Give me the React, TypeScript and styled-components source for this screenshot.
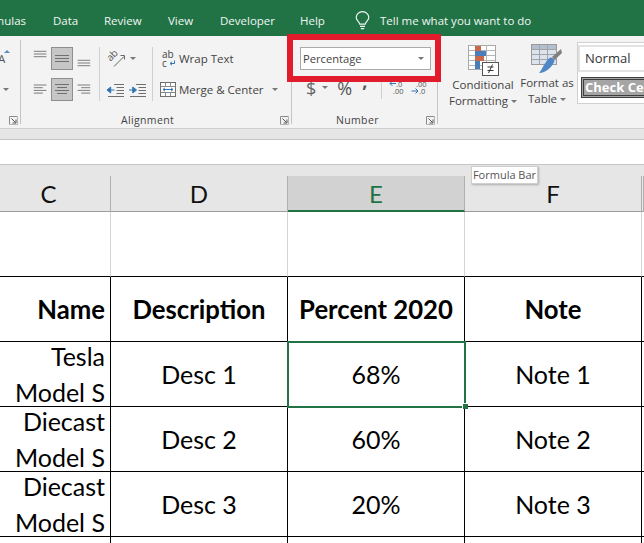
import React from "react";
import styled, { createGlobalStyle } from "styled-components";

const Global = createGlobalStyle`
  html, body { margin: 0; padding: 0; background: #fff; }
  #root { width: 644px; height: 543px; overflow: hidden; }
`;

const UI = `"Open Sans", "Noto Sans", sans-serif`;
const SHEET = `Lato, "Liberation Sans", sans-serif`;

const Page = styled.div`
  position: relative;
  width: 644px;
  height: 543px;
  overflow: hidden;
  background: #fff;
  display: flex;
  flex-direction: column;
`;

const TabBar = styled.nav`
  flex: none;
  height: 36px;
  background: #217346;
  color: #f1f6f3;
  font: 11.5px/42px ${UI};
  display: flex;
  overflow: hidden;
  white-space: nowrap;
`;
const Tab = styled.span<{ $w: number; $ml?: number }>`
  flex: none;
  width: ${(p) => p.$w}px;
  margin-left: ${(p) => p.$ml ?? 0}px;
`;
const TellMe = styled.span`
  display: flex;
  align-items: center;
  gap: 10px;
  height: 41px;
`;

const Ribbon = styled.section`
  flex: none;
  height: 92px;
  background: #f3f3f3;
  border-bottom: 1px solid #cfcfcf;
  display: flex;
  box-sizing: content-box;
  color: #444;
  font: 12px/16px ${UI};
  overflow: hidden;
`;
const Group = styled.div<{ $w: number; $last?: boolean }>`
  flex: none;
  width: ${(p) => p.$w}px;
  height: 88px;
  margin-top: 4px;
  box-sizing: border-box;
  display: flex;
  flex-direction: column;
  background: ${(p) => (p.$last ? "none" : "linear-gradient(#c4c4c4, #c4c4c4) right top / 1.5px 84px no-repeat")};
`;
const GroupBody = styled.div<{ $pl?: number }>`
  flex: 1;
  padding-top: 7px;
  padding-left: ${(p) => p.$pl ?? 0}px;
  display: flex;
  min-height: 0;
`;
const GroupFoot = styled.div<{ $pl?: number }>`
  flex: none;
  height: 16px;
  display: flex;
  align-items: center;
  font-size: 10.5px;
  letter-spacing: 0.35px;
  color: #444;
  padding: 0 3px 0 ${(p) => p.$pl ?? 0}px;
`;
const Launcher = styled.svg`
  margin-left: auto;
  width: 9px;
  height: 9px;
`;

const FontTools = styled.div`
  display: flex;
  flex-direction: column;
  gap: 8px;
  overflow: hidden;
  width: 20px;
`;
const FontRow = styled.div`
  display: flex;
  height: 23px;
  align-items: center;
`;
const SizeA = styled.span`
  margin-left: -2px;
  font-size: 11.5px;
  line-height: 27px;
  height: 27px;
  color: #555;
`;
const BlueCaret = styled.i`
  align-self: flex-start;
  margin: 3px 0 0 -1px;
  width: 0;
  height: 0;
  border-left: 3px solid transparent;
  border-right: 3px solid transparent;
  border-bottom: 3px solid #5b8ac6;
`;

const AlignGrid = styled.div`
  display: grid;
  grid-template-columns: 20px 22px 20px;
  grid-auto-rows: 23px;
  row-gap: 8px;
  align-content: start;
`;
const AlignButton = styled.div<{ $on?: boolean }>`
  box-sizing: border-box;
  width: ${(p) => (p.$on ? "22px" : "20px")};
  height: 23px;
  background: ${(p) => (p.$on ? "#c6c6c6" : "transparent")};
  border: 1px solid ${(p) => (p.$on ? "#8f8f8f" : "transparent")};
  display: flex;
  align-items: center;
  justify-content: center;
`;
const VSep = styled.div<{ $ml: number; $h?: number }>`
  flex: none;
  width: 1px;
  margin-left: ${(p) => p.$ml}px;
  height: ${(p) => p.$h ?? 54}px;
  background: #d0d0d0;
`;
const ToolStack = styled.div`
  display: flex;
  flex-direction: column;
  gap: 8px;
  margin-left: 7px;
  width: 45px;
`;
const ToolRow = styled.div<{ $gap?: number; $pl?: number }>`
  display: flex;
  align-items: center;
  height: 23px;
  gap: ${(p) => p.$gap ?? 3}px;
  padding-left: ${(p) => p.$pl ?? 0}px;
`;
const WrapStack = styled.div`
  display: flex;
  flex-direction: column;
  gap: 8px;
  margin-left: 7px;
`;
const ToolLabel = styled.span`
  white-space: nowrap;
  font-size: 11.5px;
`;
const Caret = styled.i<{ $ml?: number }>`
  display: inline-block;
  vertical-align: middle;
  flex: none;
  width: 0;
  height: 0;
  margin-left: ${(p) => p.$ml ?? 0}px;
  border-left: 3px solid transparent;
  border-right: 3px solid transparent;
  border-top: 3px solid #777;
`;

const NumberBody = styled.div`
  flex: 1;
  padding: 7px 0 0 8px;
  display: flex;
  flex-direction: column;
`;
const FormatSelect = styled.div`
  box-sizing: border-box;
  width: 131px;
  height: 23px;
  background: #fff;
  border: 1px solid #ababab;
  padding: 0 6px 0 2px;
  display: flex;
  align-items: center;
  justify-content: space-between;
  font-size: 11.2px;
  color: #444;
`;
const CurrencyRow = styled.div`
  display: flex;
  align-items: center;
  height: 23px;
  margin-top: 6px;
`;
const Dollar = styled.span`
  font-size: 18px;
  margin-left: 6px;
  color: #666;
`;
const Percent = styled.span`
  font-size: 18px;
  margin-left: 9px;
  color: #555;
`;
const Comma = styled.span`
  font-size: 18px;
  font-weight: 700;
  margin: -14px 0 0 10px;
  line-height: 14px;
  color: #555;
`;
const DecGroup = styled.div`
  display: flex;
  gap: 6px;
  margin-left: 7px;
`;

const BigButton = styled.div<{ $w: number }>`
  flex: none;
  width: ${(p) => p.$w}px;
  display: flex;
  flex-direction: column;
  align-items: center;
  margin-top: -3px;
  font-size: 11.5px;
  line-height: 16px;
  white-space: nowrap;
`;
const BigLabel = styled.span`
  margin-top: 1px;
  text-align: center;
`;
const Gallery = styled.div`
  flex: none;
  margin: -5px 0 0 1px;
  width: 70px;
  height: 62px;
  box-sizing: border-box;
  background: #fff;
  border: 1px solid #d0d0d0;
  border-right: none;
  padding: 4px 0 0 2px;
  display: flex;
  flex-direction: column;
  gap: 7px;
  overflow: hidden;
  white-space: nowrap;
`;
const StyleNormal = styled.div`
  height: 23px;
  background: #fff;
  font: 13px/23px "Open Sans", sans-serif;
  color: #333;
  padding-left: 5px;
  box-shadow: 0 0 0 2px #e2e2e2;
`;
const StyleCheck = styled.div`
  height: 21px;
  margin-left: 1px;
  background: #a5a5a5;
  border: 3px double #3f3f3f;
  box-sizing: border-box;
  color: #fff;
  font: 700 13px/15px "Open Sans", sans-serif;
  padding-left: 1px;
`;

const Band = styled.div`
  flex: none;
  height: 10px;
  background: #e6e6e6;
`;
const FormulaBar = styled.div`
  flex: none;
  height: 26px;
  box-sizing: border-box;
  background: #fff;
  border-top: 1px solid #c6c6c6;
  border-bottom: 1px solid #c6c6c6;
`;
const HeaderStrip = styled.div`
  flex: none;
  height: 11px;
  background: #e6e6e6;
`;

const SheetGrid = styled.div`
  flex: none;
  display: grid;
  grid-template-columns: 111px 177px 177px 177px 2px;
  grid-template-rows: 36px 65px 65px 65px 65px 65px 65px;
  font-family: ${SHEET};
  color: #000;
`;
const ColHead = styled.div<{ $on?: boolean; $pr?: number }>`
  box-sizing: border-box;
  display: flex;
  align-items: center;
  justify-content: center;
  font-size: 24px;
  padding-right: ${(p) => p.$pr ?? 0}px;
  background: ${(p) => (p.$on ? "#d2d2d2" : "#e6e6e6")};
  color: ${(p) => (p.$on ? "#217346" : "#111")};
  border-right: 1px solid #b0b0b0;
  border-bottom: ${(p) => (p.$on ? "2px solid #217346" : "1px solid #9e9e9e")};
`;
const Blank = styled.div<{ $end?: boolean }>`
  box-sizing: border-box;
  border-right: ${(p) => (p.$end ? "none" : "1px solid #d4d4d4")};
  border-bottom: 1px solid #000;
`;
const Cell = styled.div<{ $bold?: boolean; $right?: boolean; $on?: boolean; $end?: boolean }>`
  position: relative;
  box-sizing: border-box;
  border-right: ${(p) => (p.$end ? "none" : "1px solid #000")};
  border-bottom: 1px solid #000;
  display: flex;
  align-items: center;
  justify-content: ${(p) => (p.$right ? "flex-end" : "center")};
  padding-right: ${(p) => (p.$right ? "5px" : "0")};
  font-size: ${(p) => (p.$bold ? "25.7px" : "25px")};
  font-weight: ${(p) => (p.$bold ? 700 : 400)};
  white-space: nowrap;
  ${(p) => p.$on && `
    outline: 2px solid #217346;
    outline-offset: -1px;
    z-index: 1;
    &::after {
      content: "";
      position: absolute;
      right: -4px;
      bottom: -3px;
      width: 5px;
      height: 5px;
      background: #217346;
      border: 1px solid #fff;
      border-width: 1px 0 0 1px;
    }
  `}
`;
const NameCell = styled.div`
  box-sizing: border-box;
  border-right: 1px solid #000;
  border-bottom: 1px solid #000;
  display: flex;
  flex-direction: column;
  justify-content: flex-end;
  align-items: flex-end;
  padding-right: 5px;
  font-size: 25px;
  line-height: 36px;
  overflow: hidden;
  white-space: nowrap;
  & > span { flex: none; }
  & > span:last-child { margin-bottom: -4px; }
`;

const Highlight = styled.div`
  position: absolute;
  left: 287px;
  top: 34px;
  width: 154px;
  height: 48px;
  box-sizing: border-box;
  border: 6px solid #e31c2d;
  pointer-events: none;
`;
const Tooltip = styled.div`
  position: absolute;
  left: 471px;
  top: 166px;
  box-sizing: border-box;
  width: 67px;
  height: 18px;
  background: #fff;
  border: 1px solid #cfcfcf;
  box-shadow: 1px 1px 2px rgba(0,0,0,.25);
  font: 11px/16px ${UI};
  color: #555;
  text-align: center;
  white-space: nowrap;
  z-index: 3;
`;

const G = "#6f6f6f";
const Lines = ({ rows }: { rows: [number, number, number][] }) => (
  <svg width="20" height="21" viewBox="0 0 20 21">
    {rows.map(([a, b, y], i) => (
      <line key={i} x1={a} x2={b} y1={y} y2={y} stroke={G} strokeWidth="1" />
    ))}
  </svg>
);
const LauncherIcon = () => (
  <Launcher viewBox="0 0 9 9">
    <path d="M.5 8.5V.5h8" fill="none" stroke="#8a8a8a" />
    <path d="M2.5 2.5l4 4M7 3.5v3.5H3.5" fill="none" stroke="#555" />
    <path d="M8.5 1v7.5H1" fill="none" stroke="#b5b5b5" />
  </Launcher>
);
const Bulb = () => (
  <svg width="15" height="20" viewBox="0 0 15 20" fill="none" stroke="#f1f6f3" strokeWidth="1.2">
    <path d="M4.8 13.2C4.5 10.8 1.2 9.6 1.2 6.6a6.3 6 0 0 1 12.6 0c0 3-3.3 4.2-3.6 6.6z" />
    <path d="M5 15.3h5M5.8 17.6h3.4" />
  </svg>
);
const Orientation = () => (
  <svg width="20" height="18" viewBox="0 0 20 18">
    <text x="0" y="0" transform="translate(2 9) rotate(-45) translate(-1 3)" fontFamily="Open Sans" fontSize="10" fill="#555">ab</text>
    <path d="M7 16.5L17 6.5M13.5 5.5h4v4" stroke="#666" fill="none" />
  </svg>
);
const Indent = ({ flip }: { flip?: boolean }) => (
  <svg width="17" height="16" viewBox="0 0 17 16">
    <path d="M7 2.5h10M9.5 5.5h7.5M9.5 8.5h7.5M9.5 11.5h7.5" stroke={G} />
    <path d="M1 14.5h16" stroke={G} />
    {flip ? (
      <path d="M0 8h4.5M3.8 5L7.5 8L3.8 11z" stroke="#2f75b5" fill="#2f75b5" />
    ) : (
      <path d="M7.5 8H3M3.7 5L0 8l3.7 3z" stroke="#2f75b5" fill="#2f75b5" />
    )}
  </svg>
);
const WrapIcon = () => (
  <svg width="14" height="17" viewBox="0 0 14 17">
    <text x="0" y="8" fontFamily="Open Sans" fontSize="10" fill="#444">ab</text>
    <text x="0" y="16.5" fontFamily="Open Sans" fontSize="10" fill="#444">c</text>
    <path d="M12.5 10.5v3h-4M10 11.8l-2 1.7 2 1.7" fill="none" stroke="#2f75b5" />
  </svg>
);
const MergeIcon = () => (
  <svg width="16" height="16" viewBox="0 0 16 16" fill="none">
    <rect x=".5" y=".5" width="15" height="14" fill="#fff" stroke="#6f6f6f" />
    <path d="M.5 4.5h15M.5 10.5h15M5.5.5v4M10.5.5v4M5.5 10.5v4M10.5 10.5v4" stroke="#8a8a8a" />
    <path d="M3 7.5h10M5 5.8L3 7.5l2 1.7M11 5.8l2 1.7-2 1.7" stroke="#2f75b5" />
  </svg>
);
const DecIcon = ({ inc }: { inc?: boolean }) => (
  <svg width="16" height="16" viewBox="0 0 16 16">
    <text x={inc ? 5 : 7} y="6.5" fontFamily="Open Sans" fontSize="7.5" fill="#555">{inc ? ".00" : ".0"}</text>
    <text x={inc ? 8 : 4} y="14" fontFamily="Open Sans" fontSize="7.5" fill="#555">{inc ? ".0" : ".00"}</text>
    {inc ? (
      <path d="M.5 11h6M4.5 8.5L7 11l-2.5 2.5" fill="none" stroke="#2f75b5" />
    ) : (
      <path d="M7 3.5H1M3.5 1L1 3.5 3.5 6" fill="none" stroke="#2f75b5" />
    )}
  </svg>
);
const CondIcon = () => (
  <svg width="32" height="32" viewBox="0 0 32 32">
    <rect x="1.5" y="1.5" width="27" height="24" fill="#fff" stroke="#a8a8a8" />
    <path d="M10.5 1.5v24M19.5 1.5v24M1.5 6.5h27M1.5 11.5h27M1.5 16.5h27M1.5 21.5h27" stroke="#b5b5b5" />
    <rect x="8" y="2" width="6" height="5" fill="#c9674a" />
    <rect x="8" y="7" width="11" height="5" fill="#4a7ebb" />
    <rect x="8" y="12" width="9" height="5" fill="#c9674a" />
    <rect x="8" y="17" width="5" height="8" fill="#4a7ebb" />
    <rect x="15.5" y="18.5" width="16" height="13" fill="#fff" stroke="#555" />
    <path d="M20.5 23h6M20.5 26.5h6M25.5 20.5l-4 8.5" stroke="#333" fill="none" />
  </svg>
);
const TableIcon = () => (
  <svg width="32" height="30" viewBox="0 0 32 30">
    <rect x=".5" y=".5" width="25" height="20" fill="#dbe4ee" stroke="#9a9a9a" />
    <rect x="1" y="1" width="24" height="4" fill="#b3bfcc" />
    <path d="M8.5.5v20M16.5.5v20M.5 5.5h25M.5 10.5h25M.5 15.5h25" stroke="#a3a3a3" />
    <path d="M30 5L21 13l2.5 3L31 9z" fill="#808080" />
    <path d="M20 13.5c2 .5 3 2 3.5 3.5C21 23 15 29 8 29c2-2 3-5 5-8s4-7 7-7.5z" fill="#4f86c6" />
  </svg>
);

const rows = [
  ["Tesla", "Desc 1", "68%", "Note 1"],
  ["Diecast", "Desc 2", "60%", "Note 2"],
  ["Diecast", "Desc 3", "20%", "Note 3"],
];

export default function App() {
  return (
    <Page>
      <Global />
      <TabBar>
        <Tab $w={77} $ml={-24}>Formulas</Tab>
        <Tab $w={51}>Data</Tab>
        <Tab $w={64}>Review</Tab>
        <Tab $w={52}>View</Tab>
        <Tab $w={80}>Developer</Tab>
        <Tab $w={55}>Help</Tab>
        <TellMe>
          <Bulb />
          <span>Tell me what you want to do</span>
        </TellMe>
      </TabBar>

      <Ribbon>
        <Group $w={21}>
          <GroupBody>
            <FontTools>
              <FontRow><SizeA>A</SizeA><BlueCaret /></FontRow>
              <FontRow><Caret $ml={3} /></FontRow>
            </FontTools>
          </GroupBody>
          <GroupFoot><LauncherIcon /></GroupFoot>
        </Group>
        <Group $w={271}>
          <GroupBody $pl={10}>
            <AlignGrid>
              <AlignButton><Lines rows={[[2, 16, 2.5], [2, 16, 5.5], [2, 16, 8.5]]} /></AlignButton>
              <AlignButton $on><Lines rows={[[3, 17, 7.5], [3, 17, 10.5], [3, 17, 13.5]]} /></AlignButton>
              <AlignButton><Lines rows={[[4, 18, 12.5], [4, 18, 15.5], [4, 18, 18.5]]} /></AlignButton>
              <AlignButton><Lines rows={[[2, 16, 5.5], [2, 12, 8.5], [2, 16, 11.5], [2, 12, 14.5]]} /></AlignButton>
              <AlignButton $on><Lines rows={[[3, 17, 5.5], [5, 15, 8.5], [3, 17, 11.5], [5, 15, 14.5]]} /></AlignButton>
              <AlignButton><Lines rows={[[4, 18, 5.5], [8, 18, 8.5], [4, 18, 11.5], [8, 18, 14.5]]} /></AlignButton>
            </AlignGrid>
            <VSep $ml={6} />
            <ToolStack>
              <ToolRow><Orientation /><Caret /></ToolRow>
              <ToolRow $gap={5}><Indent /><Indent flip /></ToolRow>
            </ToolStack>
            <VSep $ml={0} />
            <WrapStack>
              <ToolRow $pl={2}><WrapIcon /><ToolLabel>Wrap Text</ToolLabel></ToolRow>
              <ToolRow><MergeIcon /><ToolLabel>Merge &amp; Center</ToolLabel><Caret $ml={5} /></ToolRow>
            </WrapStack>
          </GroupBody>
          <GroupFoot $pl={100}>Alignment<LauncherIcon /></GroupFoot>
        </Group>
        <Group $w={146}>
          <NumberBody>
            <FormatSelect>Percentage<Caret /></FormatSelect>
            <CurrencyRow>
              <Dollar>$</Dollar>
              <Caret $ml={6} />
              <Percent>%</Percent>
              <Comma>,</Comma>
              <VSep $ml={14} $h={22} />
              <DecGroup>
                <DecIcon />
                <DecIcon inc />
              </DecGroup>
            </CurrencyRow>
          </NumberBody>
          <GroupFoot $pl={44}>Number<LauncherIcon /></GroupFoot>
        </Group>
        <Group $w={206} $last>
          <GroupBody $pl={10}>
            <BigButton $w={70}>
              <CondIcon />
              <BigLabel>Conditional<br />Formatting <Caret /></BigLabel>
            </BigButton>
            <BigButton $w={58}>
              <TableIcon />
              <BigLabel>Format as<br />Table <Caret /></BigLabel>
            </BigButton>
            <Gallery>
              <StyleNormal>Normal</StyleNormal>
              <StyleCheck>Check Cell</StyleCheck>
            </Gallery>
          </GroupBody>
        </Group>
      </Ribbon>

      <Band />
      <FormulaBar />
      <HeaderStrip />

      <SheetGrid>
        <ColHead $pr={13}>C</ColHead>
        <ColHead>D</ColHead>
        <ColHead $on>E</ColHead>
        <ColHead>F</ColHead>
        <ColHead />

        <Blank /><Blank /><Blank /><Blank /><Blank $end />

        <Cell $bold $right>Name</Cell>
        <Cell $bold>Description</Cell>
        <Cell $bold>Percent 2020</Cell>
        <Cell $bold>Note</Cell>
        <Cell $end />

        {rows.map((r, i) => (
          <React.Fragment key={i}>
            <NameCell><span>{r[0]}</span><span>Model S</span></NameCell>
            <Cell>{r[1]}</Cell>
            <Cell $on={i === 0}>{r[2]}</Cell>
            <Cell>{r[3]}</Cell>
            <Cell $end />
          </React.Fragment>
        ))}

        <Cell /><Cell /><Cell /><Cell /><Cell $end />
      </SheetGrid>

      <Highlight />
      <Tooltip>Formula Bar</Tooltip>
    </Page>
  );
}
